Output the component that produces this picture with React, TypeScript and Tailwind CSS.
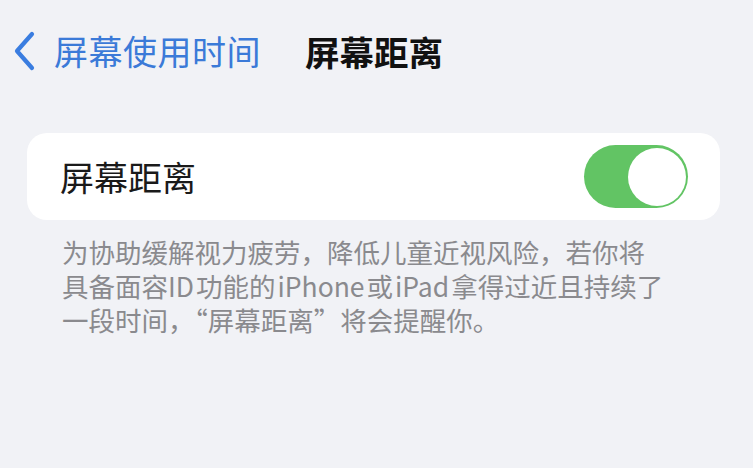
import React from "react";

const font = {
  fontFamily: '"Noto Sans CJK SC", "Noto Sans", sans-serif',
};

function Chevron() {
  return (
    <svg width="26" height="40" viewBox="0 0 26 40" fill="none">
      <path
        d="M20 3 L5 20 L20 37"
        stroke="#3a7de0"
        strokeWidth="4.2"
        strokeLinecap="round"
        strokeLinejoin="round"
      />
    </svg>
  );
}

function Toggle() {
  return (
    <div className="flex h-[63px] w-[104px] items-center justify-end rounded-full bg-[#62c464] p-[2.5px]">
      <div className="h-[58px] w-[58px] rounded-full bg-white" />
    </div>
  );
}

// narrow gap Apple inserts between Han and Latin runs
function Gap() {
  return <span className="inline-block w-[2px]" />;
}

export default function App() {
  return (
    <div
      className="h-[468px] w-[753px] overflow-hidden bg-[#f1f2f6]"
      style={font}
    >
      {/* navigation bar */}
      <div className="relative flex h-[102px] items-center pl-[12px]">
        <Chevron />
        <span className="ml-[16px] text-[34px] leading-none tracking-[0.5px] text-[#3b7ad8]">
          屏幕使用时间
        </span>
        <span className="ml-[44px] text-[34.5px] font-bold leading-none text-[#111]">
          屏幕距离
        </span>
      </div>

      {/* setting row */}
      <div className="ml-[27px] mr-[33px] mt-[31px] flex h-[87px] items-center justify-between rounded-[20px] bg-white pl-[33px] pr-[32px]">
        <span className="text-[34px] leading-none text-[#1a1a1a]">屏幕距离</span>
        <Toggle />
      </div>

      {/* footer note */}
      <div className="mt-[15px] pl-[62px] text-[26.5px] text-[#8a8a8e]">
        <p className="h-[34px] overflow-visible whitespace-nowrap leading-[34px]">
          为协助缓解视力疲劳，降低儿童近视风险，若你将
        </p>
        <p className="h-[34px] overflow-visible whitespace-nowrap leading-[34px]">
          具备面容ID<Gap />功能的<Gap />iPhone<Gap />或<Gap />iPad<Gap />拿得过近且持续了
        </p>
        <p className="h-[34px] overflow-visible whitespace-nowrap leading-[34px]">
          一段时间，“屏幕距离”将会提醒你。
        </p>
      </div>
    </div>
  );
}
